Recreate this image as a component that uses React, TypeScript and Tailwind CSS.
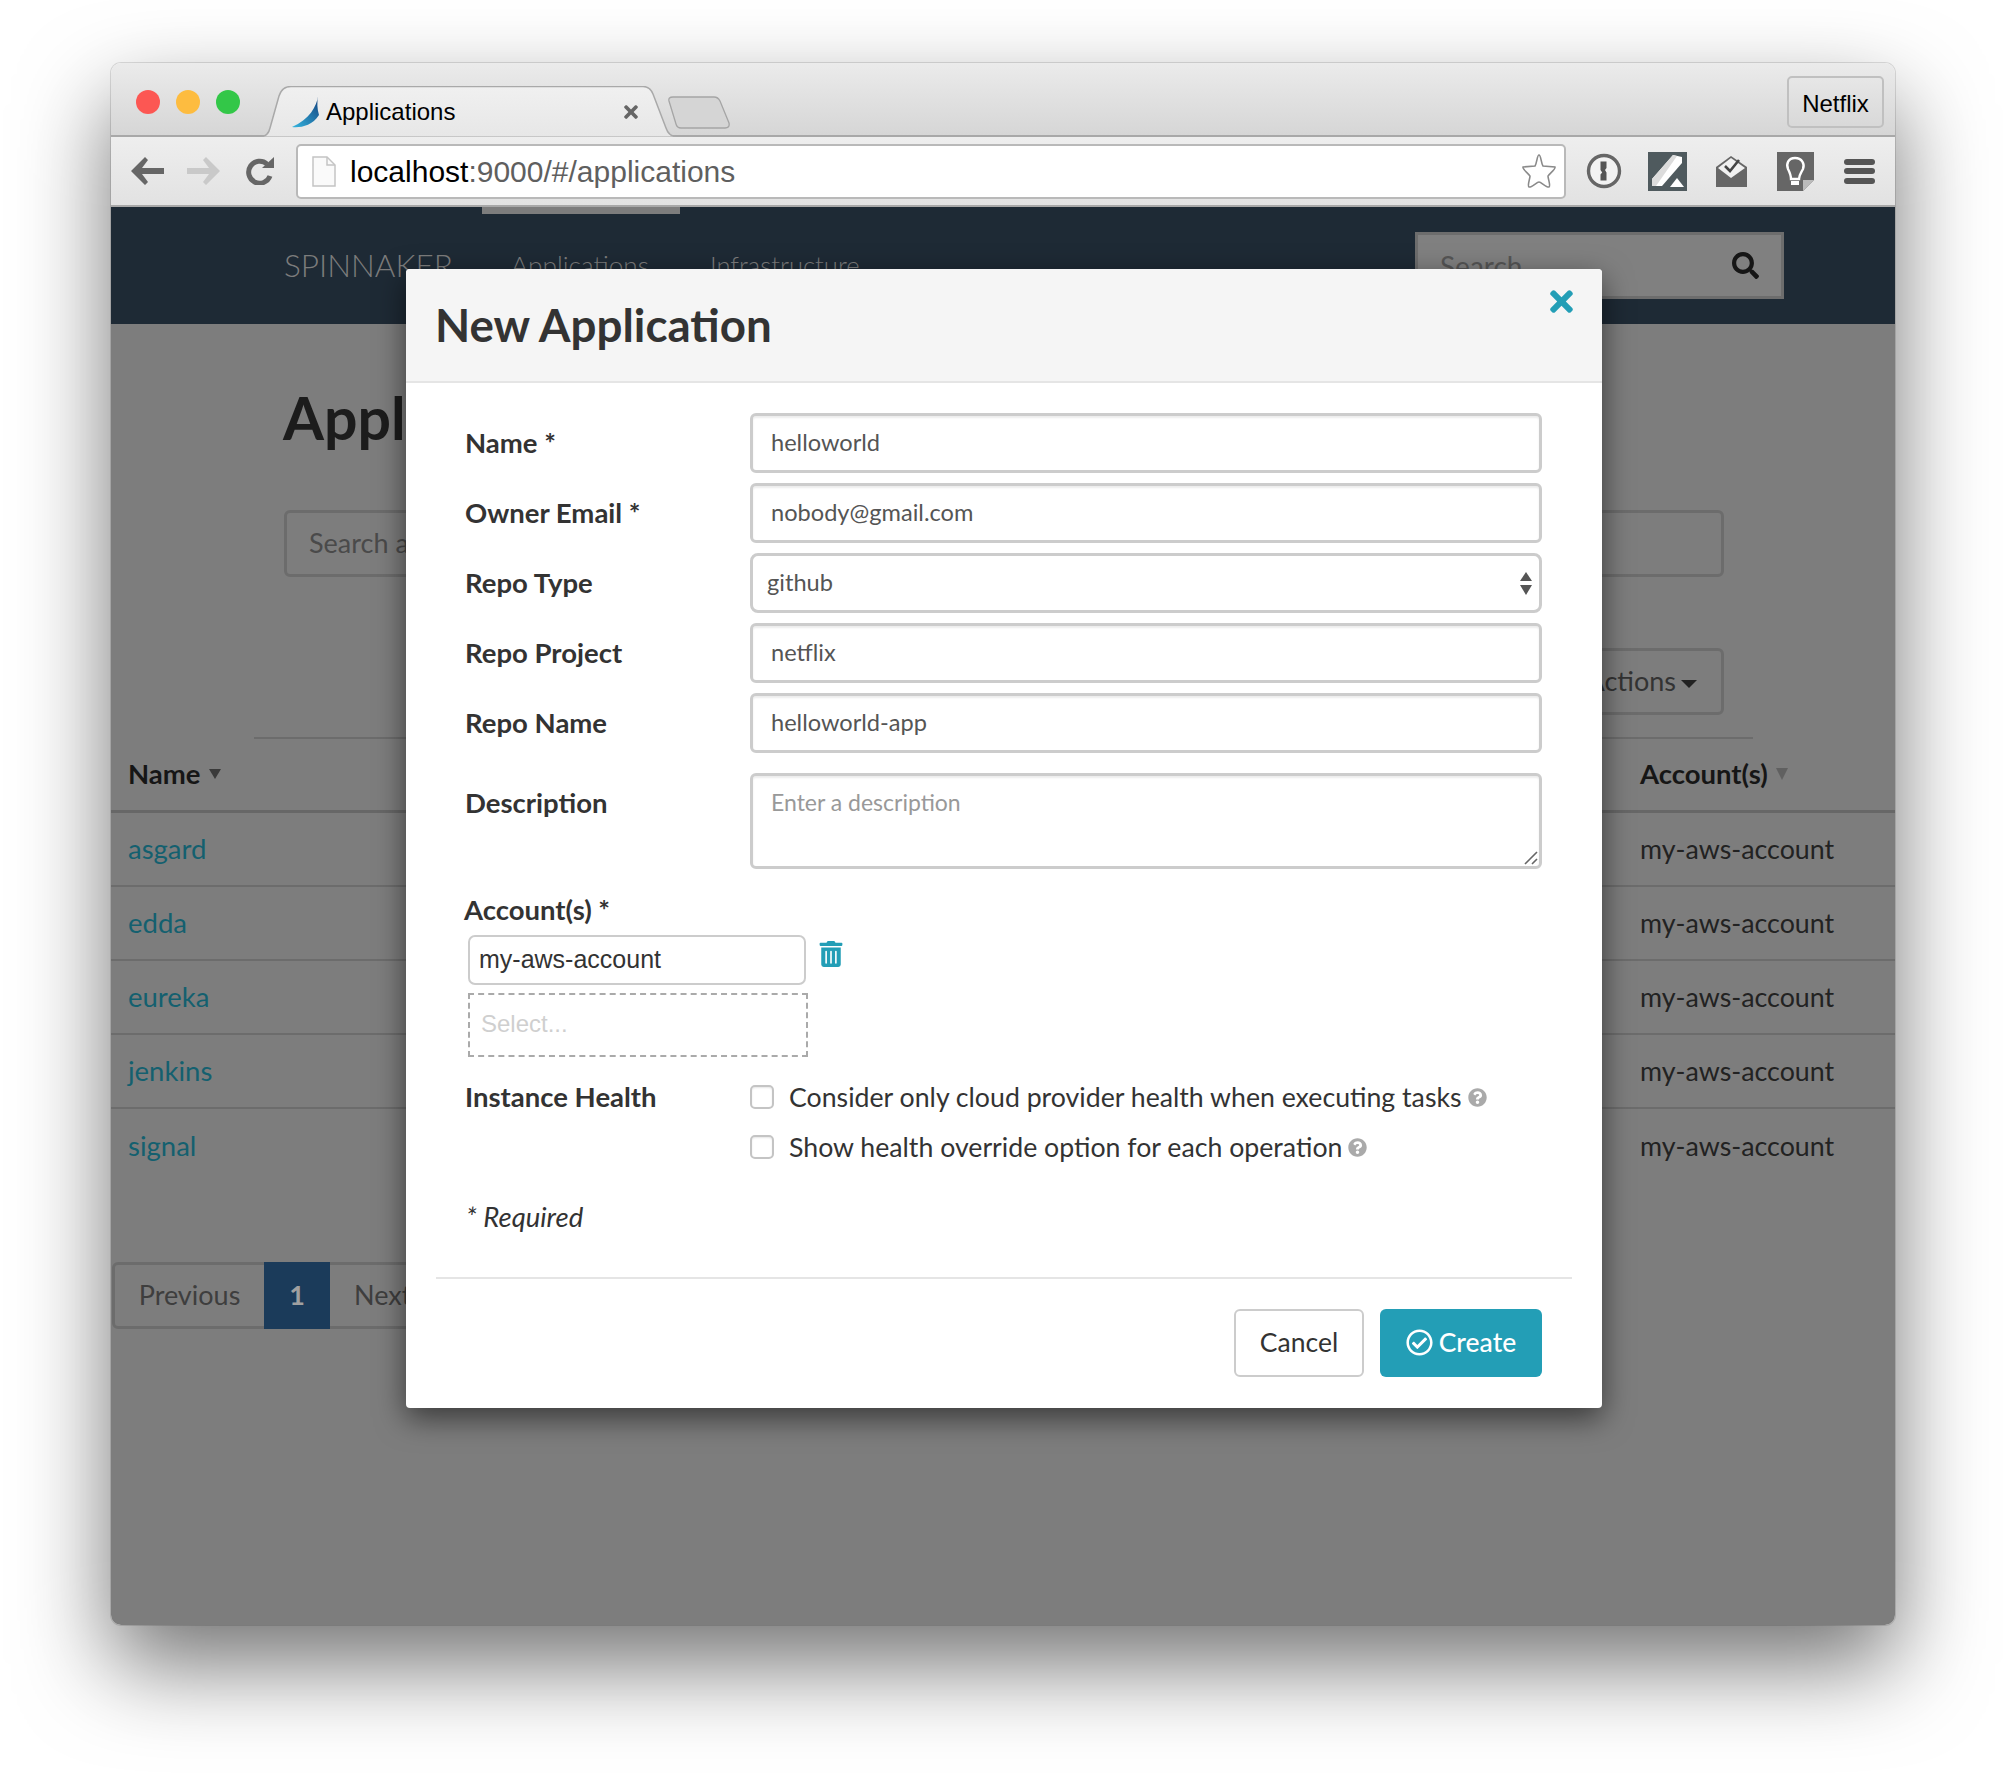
import type { ReactNode } from 'react';
import { FaQuestionCircle, FaRegCheckCircle, FaSearch, FaTimes, FaTrashAlt } from 'react-icons/fa';

const rows = ['asgard', 'edda', 'eureka', 'jenkins', 'signal'];

function Tab() {
  return (
    <div className="relative -mb-[2px] ml-[18px] flex h-[51px] w-[418px] items-center self-end pl-[33px] pr-[35px]">
      <svg className="absolute inset-0" width="418" height="51" viewBox="0 0 418 51" fill="none">
        <defs>
          <linearGradient id="tabFill" x1="0" y1="0" x2="0" y2="1">
            <stop offset="0" stopColor="#f0f0f0" />
            <stop offset="1" stopColor="#e7e7e7" />
          </linearGradient>
        </defs>
        <path d="M3 50.5Q10 50.5 12 42L21 10Q24 .5 33 .5H385Q392 .5 395 8L408 42Q411 50.5 418 50.5Z" fill="url(#tabFill)" />
        <path d="M3 50.5Q10 50.5 12 42L21 10Q24 .5 33 .5H385Q392 .5 395 8L408 42Q411 50.5 418 50.5" stroke="#a9a9a9" strokeWidth="1.5" />
      </svg>
      <svg className="relative" width="30" height="32" viewBox="0 0 30 32">
        <defs>
          <linearGradient id="sail" x1="1" y1="0" x2="0" y2="1">
            <stop offset="0" stopColor="#123f7c" />
            <stop offset="1" stopColor="#35b6e0" />
          </linearGradient>
        </defs>
        <path d="M27 0C26 10 18 24 1 31C9 32 21 30 28 19C26 13 26 6 27 0Z" fill="url(#sail)" />
      </svg>
      <span className="relative ml-[5px] font-['Liberation_Sans',sans-serif] text-[24px] leading-none text-black">Applications</span>
      <FaTimes className="relative ml-auto text-[20px] text-[#666]" />
    </div>
  );
}

function NewTab() {
  return (
    <svg className="-ml-[8px] mt-[33px] self-start" width="64" height="33" viewBox="0 0 64 33" fill="#d5d5d5" stroke="#a5a5a5" strokeWidth="1.3">
      <path d="M1 5Q0 1 5 1H46Q50 1 52 5L61 27Q62 32 57 32H13Q9 32 8 28Z" />
    </svg>
  );
}

function ToolbarIcons() {
  return (
    <div className="ml-[20px] flex items-center">
      {/* 1Password */}
      <svg width="36" height="36" viewBox="0 0 36 36">
        <circle cx="18" cy="18" r="15.5" fill="#f2f2f2" stroke="#666" strokeWidth="3.4" />
        <path d="M14.5 8.5h6v6.5l-1.5 2 1.5 2.5v8h-6v-6l1.7-2-1.7-2.5z" fill="#555" />
      </svg>
      {/* Notes */}
      <svg className="ml-[26px]" width="39" height="39" viewBox="0 0 39 39">
        <rect width="39" height="39" fill="#4f5a5e" />
        <path d="M4 34L4 27L25 3L34 5L34 11L14 34Z" fill="#fff" />
        <path d="M4 34L4 27L25 3L29 4L8 34Z" fill="#dcdcdc" />
        <path d="M22 35L29 26L36 35Z" fill="#fff" />
      </svg>
      {/* Mail */}
      <svg className="ml-[28px]" width="33" height="33" viewBox="0 0 33 33">
        <path d="M1 12L16 1L32 12V32H1Z" fill="#666" />
        <path d="M3 13L16 3L30 13L16 23Z" fill="#f0f0f0" />
        <path d="M10 11L15 16L24 5" fill="none" stroke="#444" strokeWidth="2.6" />
      </svg>
      {/* Bulb note */}
      <svg className="ml-[29px]" width="37" height="39" viewBox="0 0 37 39">
        <path d="M0 0H37V28L26 39H0Z" fill="#666" />
        <path d="M37 28H26V39Z" fill="#bbb" />
        <path d="M18 6C11 6 9 12 11 17C13 21 14 23 14 27H22C22 23 24 21 26 17C28 12 25 6 18 6Z" fill="none" stroke="#fff" strokeWidth="2.4" />
        <path d="M14 29H22V33H14Z" fill="#fff" />
      </svg>
      {/* Menu */}
      <div className="ml-[30px] flex w-[31px] flex-col gap-[3.5px]">
        <div className="h-[6px] rounded-[3px] bg-[#555]" />
        <div className="h-[6px] rounded-[3px] bg-[#555]" />
        <div className="h-[6px] rounded-[3px] bg-[#555]" />
      </div>
    </div>
  );
}

function Toolbar() {
  return (
    <div className="flex h-[70px] items-center border-b-2 border-[#a8a8a8] bg-gradient-to-b from-[#eeeeee] to-[#e2e2e2] pl-[20px]">
      <svg width="34" height="28" viewBox="0 0 34 28" fill="#666">
        <path d="M14 0L17 3L11 11H33V17H11L17 25L14 28L0 14Z" />
      </svg>
      <svg className="ml-[21px]" width="34" height="28" viewBox="0 0 34 28" fill="#c9c9c9">
        <path d="M20 0L17 3L23 11H1V17H23L17 25L20 28L34 14Z" />
      </svg>
      <svg className="ml-[26px]" width="28" height="28" viewBox="0 0 28 28" fill="none">
        <path d="M21 7A11 11 0 1 0 24 19" stroke="#666" strokeWidth="5" />
        <path d="M16 11H28V0Z" fill="#666" />
      </svg>
      <div className="ml-[22px] flex h-[55px] w-[1270px] items-center rounded-[5px] border-2 border-[#b9b9b9] bg-white pl-[14px] pr-[7px]">
        <svg width="24" height="31" viewBox="0 0 24 31">
          <path d="M1 1H15L23 9V30H1Z" fill="#fafafa" stroke="#c4c4c4" strokeWidth="1.5" />
          <path d="M15 1V9H23" fill="none" stroke="#c4c4c4" strokeWidth="1.5" />
        </svg>
        <span className="ml-[14px] mt-[2px] font-['Liberation_Sans',sans-serif] text-[30px] leading-none text-black">
          localhost<span className="text-[#5f5f5f]">:9000/#/applications</span>
        </span>
        <svg className="ml-auto" width="36" height="36" viewBox="0 0 36 36" fill="#fff" stroke="#8a8a8a" strokeWidth="1.6">
          <path d="M18 2C20 2 20 10 22 13L34 14C35 16 28 21 27 23C27 26 30 33 28 34C26 35 20 29 18 29C16 29 10 35 8 34C6 33 9 26 9 23C8 21 1 16 2 14L14 13C16 10 16 2 18 2Z" />
        </svg>
      </div>
      <ToolbarIcons />
    </div>
  );
}

function Chrome() {
  return (
    <div className="flex h-[74px] border-b-2 border-[#a8a8a8] bg-gradient-to-b from-[#ebebeb] to-[#d6d6d6]">
      <div className="ml-[25px] mt-[27px] flex gap-[16px] self-start">
        <div className="size-[24px] rounded-full bg-[#fc5753]" />
        <div className="size-[24px] rounded-full bg-[#fdbc40]" />
        <div className="size-[24px] rounded-full bg-[#33c748]" />
      </div>
      <Tab />
      <NewTab />
      <div className="ml-auto mr-[11px] mt-[13px] flex h-[52px] w-[97px] items-center justify-center self-start rounded-[5px] border-2 border-[#c0c0c0] pt-[3px] font-['Liberation_Sans',sans-serif] text-[24px] text-black">
        Netflix
      </div>
    </div>
  );
}

function Nav() {
  return (
    <div className="flex h-[117px] items-center bg-[#1e2a35] pl-[173px] pr-[111px] font-[Lato,sans-serif] text-[#7c7c7c]">
      <div className="w-[198px] text-[31.5px] font-light leading-none">SPINNAKER</div>
      <div className="flex h-full w-[198px] items-center border-y-[7px] border-t-[#7d7d7d] border-b-transparent pl-[29px] text-[26.2px] font-light">Applications</div>
      <div className="px-[30px] text-[25.6px] font-light">Infrastructure</div>
      <div className="ml-auto flex h-[67px] w-[369px] items-center justify-between border-[3px] border-[#6d6d6d] bg-[#808080] pl-[22px] pr-[22px]">
        <span className="text-[28px] text-[#555]">Search</span>
        <FaSearch className="text-[27px] text-[#161616]" />
      </div>
    </div>
  );
}

function Page() {
  return (
    <div className="flex-1 bg-[#7d7d7d] font-[Lato,sans-serif] text-[#222]">
      <div className="ml-[172px] mt-[56px] h-[76px] whitespace-nowrap text-[59px] font-bold leading-[76px] text-[#1c1c1c]">Applications</div>
      <div className="ml-[173px] mr-[171px] mt-[54px] flex h-[67px] items-center rounded-[6px] border-[3px] border-[#6c6c6c] pl-[22px] text-[27px] text-[#4a4a4a]">
        Search all applications
      </div>
      <div className="mr-[171px] mt-[71px] flex justify-end">
        <div className="flex h-[67px] w-[230px] items-center justify-end rounded-[6px] border-[3px] border-[#6c6c6c] pr-[24px] text-[27px] text-[#333]">
          Actions
          <span className="ml-[5px] mt-[5px] size-0 border-x-[8px] border-t-[8px] border-x-transparent border-t-[#222]" />
        </div>
      </div>
      <div className="ml-[143px] mr-[142px] mt-[22px] h-[2px] bg-[#6c6c6c]" />
      <div className="flex h-[74px] items-center justify-between border-b-[3px] border-[#676767] pb-[2px] pl-[17px] text-[27.5px] font-bold text-[#161616]">
        <span className="flex items-center">
          Name<span className="ml-[8px] size-0 border-x-[6px] border-t-[10px] border-x-transparent border-t-[#3a3a3a]" />
        </span>
        <span className="flex w-[255px] items-center">
          Account(s)<span className="ml-[8px] size-0 border-x-[6px] border-t-[12px] border-x-transparent border-t-[#606060]" />
        </span>
      </div>
      {rows.map((name, i) => (
        <div key={name} className={`flex h-[74px] items-center justify-between pl-[17px] ${i < 4 ? 'border-b-2 border-[#6c6c6c]' : ''}`}>
          <span className="text-[27.5px] text-[#14606f]">{name}</span>
          <span className="w-[255px] text-[26.8px]">my-aws-account</span>
        </div>
      ))}
      <div className="ml-[1px] mt-[79px] flex h-[67px] w-[341px] items-center rounded-[6px] border-[3px] border-[#6c6c6c] text-[27px] text-[#3e3e3e]">
        <div className="w-[149px] text-center">Previous</div>
        <div className="flex h-[67px] w-[66px] items-center justify-center bg-[#1b3b5a] font-bold text-[#a0a0a0]">1</div>
        <div className="pl-[24px]">Next</div>
      </div>
    </div>
  );
}

function FieldRow({ label, children }: { label: string; children: ReactNode }) {
  return (
    <div className="flex items-start">
      <div className="flex h-[60px] w-[285px] items-center text-[27.5px] font-bold text-[#333]">{label}</div>
      {children}
    </div>
  );
}

function TextField({ value }: { value: string }) {
  return (
    <div className="flex h-[60px] w-[792px] items-center rounded-[6px] border-[3px] border-[#cccccc] pl-[18px] text-[23.6px] text-[#555] shadow-[inset_0_2px_2px_rgba(0,0,0,0.075)]">
      {value}
    </div>
  );
}

function CheckRow({ text }: { text: string }) {
  return (
    <div className="flex h-[50px] items-center text-[26.7px] text-[#333]">
      <div className="size-[24px] rounded-[5px] border-2 border-[#c4c4c4] shadow-[inset_0_1px_2px_rgba(0,0,0,0.1)]" />
      <span className="ml-[15px]">{text}</span>
      <FaQuestionCircle className="ml-[6px] text-[19px] text-[#aaaaaa]" />
    </div>
  );
}

function NewApplicationModal() {
  return (
    <div className="absolute left-[295px] top-[206px] h-[1139px] w-[1196px] rounded-[4px] bg-white font-[Lato,sans-serif] shadow-[0_10px_30px_rgba(0,0,0,0.55)]">
      <div className="flex h-[114px] items-start justify-between rounded-t-[4px] border-b-2 border-[#e5e5e5] bg-[#f5f5f5] pl-[29px] pr-[24px]">
        <div className="mt-[29px] text-[45.7px] font-bold leading-[54px] text-[#333]">New Application</div>
        <FaTimes className="mt-[16px] text-[33px] text-[#239eb6]" />
      </div>

      <div className="px-[30px]">
        <div className="flex flex-col gap-[10px] pl-[29px] pt-[30px]">
          <FieldRow label="Name *"><TextField value="helloworld" /></FieldRow>
          <FieldRow label="Owner Email *"><TextField value="nobody@gmail.com" /></FieldRow>
          <FieldRow label="Repo Type">
            <div className="flex h-[60px] w-[792px] items-center justify-between rounded-[8px] border-[3px] border-[#cccccc] pl-[14px] pr-[7px] text-[23.6px] text-[#555]">
              github
              <svg width="12" height="23" viewBox="0 0 12 23" fill="#555">
                <path d="M6 0L12 9H0Z" />
                <path d="M0 13H12L6 23Z" />
              </svg>
            </div>
          </FieldRow>
          <FieldRow label="Repo Project"><TextField value="netflix" /></FieldRow>
          <FieldRow label="Repo Name"><TextField value="helloworld-app" /></FieldRow>
          <div className="mt-[10px] flex items-start">
            <div className="flex h-[60px] w-[285px] items-center text-[27.5px] font-bold text-[#333]">Description</div>
            <div className="relative h-[96px] w-[792px] rounded-[6px] border-[3px] border-[#cccccc] pl-[18px] pt-[9px] text-[23px] text-[#999] shadow-[inset_0_2px_2px_rgba(0,0,0,0.075)]">
              Enter a description
              <svg className="absolute bottom-[1px] right-[1px]" width="14" height="14" viewBox="0 0 14 14" stroke="#666" strokeWidth="1.6">
                <path d="M1 13L13 1M8 13L13 8" />
              </svg>
            </div>
          </div>
        </div>

        <div className="pl-[28px]">
          <div className="mt-[24px] flex h-[34px] items-center text-[27.5px] font-bold text-[#333]">Account(s) *</div>
          <div className="ml-[4px] mt-[8px] flex items-start">
            <div className="flex h-[50px] w-[338px] items-center rounded-[7px] border-2 border-[#cccccc] pl-[9px] font-['Liberation_Sans',sans-serif] text-[25px] text-[#333]">
              my-aws-account
            </div>
            <FaTrashAlt className="ml-[12px] mt-[6px] text-[26px] text-[#239eb6]" />
          </div>
          <div className="ml-[4px] mt-[8px] flex h-[64px] w-[340px] items-center border-2 border-dashed border-[#aaaaaa] pb-[2px] pl-[11px] font-['Liberation_Sans',sans-serif] text-[24px] text-[#cfcfcf]">
            Select...
          </div>
        </div>

        <div className="mt-[15px] flex pl-[29px]">
          <div className="flex h-[50px] w-[285px] items-center text-[27.5px] font-bold text-[#333]">Instance Health</div>
          <div>
            <CheckRow text="Consider only cloud provider health when executing tasks" />
            <CheckRow text="Show health override option for each operation" />
          </div>
        </div>

        <div className="ml-[30px] mt-[27px] h-[36px] text-[27.5px] italic leading-[36px] text-[#333]">* Required</div>
        <div className="mt-[42px] h-[2px] bg-[#e5e5e5]" />

        <div className="mt-[30px] flex justify-end gap-[16px] pr-[30px]">
          <div className="flex h-[68px] w-[130px] items-center justify-center rounded-[6px] border-2 border-[#cccccc] text-[26.5px] text-[#333]">Cancel</div>
          <div className="flex h-[68px] w-[162px] items-center justify-center rounded-[6px] bg-[#239eb6] text-[26.5px] font-medium text-white">
            <FaRegCheckCircle className="mb-[2px] mr-[6px] text-[27px]" />
            Create
          </div>
        </div>
      </div>
    </div>
  );
}

export default function App() {
  return (
    <div className="h-[1784px] w-[2006px] overflow-hidden bg-white pl-[111px] pt-[63px]">
      <div className="w-[1784px] rounded-[10px] shadow-[0_0_0_1px_rgba(0,0,0,0.12),0_40px_90px_rgba(0,0,0,0.55)]">
        <div className="relative flex h-[1562px] w-[1784px] flex-col overflow-hidden rounded-[10px]">
          <Chrome />
          <Toolbar />
          <Nav />
          <Page />
          <NewApplicationModal />
        </div>
      </div>
    </div>
  );
}
